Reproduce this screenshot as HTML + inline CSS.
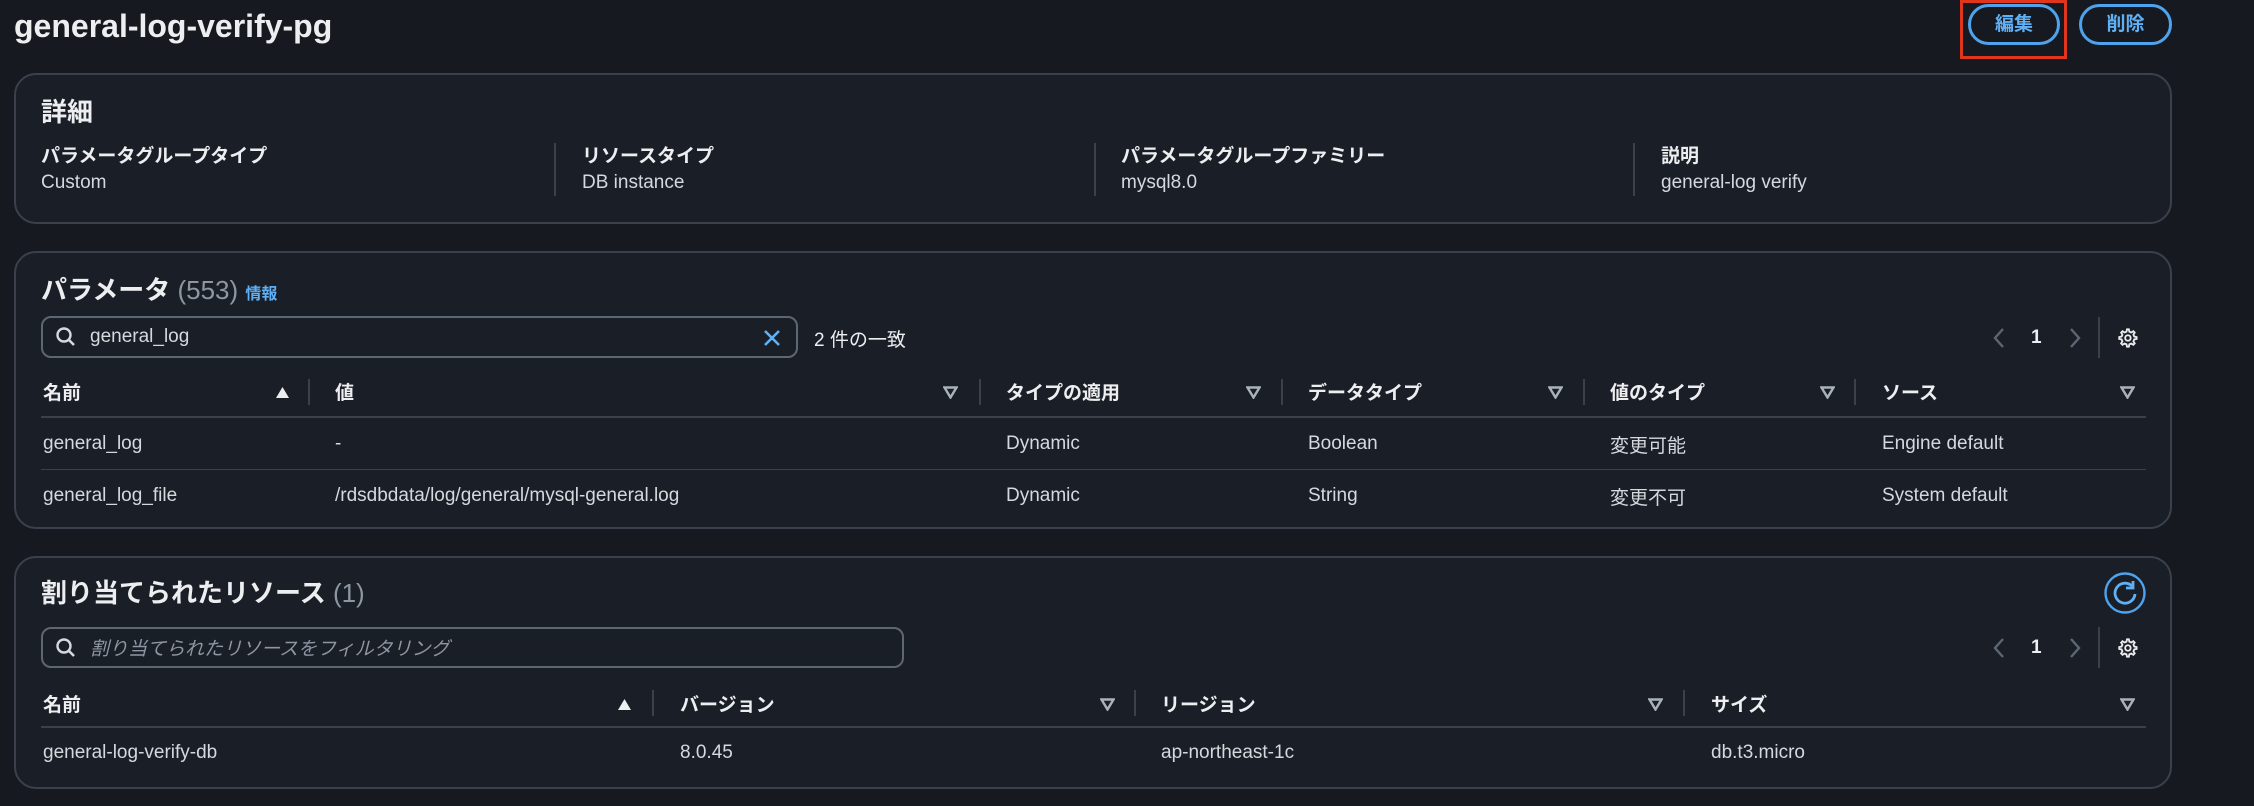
<!DOCTYPE html>
<html><head><meta charset="utf-8"><style>
*{margin:0;padding:0;box-sizing:border-box}
body{width:2254px;height:806px;background:#161a20;font-family:"Liberation Sans","Noto Sans CJK JP",sans-serif;color:#d5d9de;position:relative;overflow:hidden;font-size:19px}
.a{position:absolute;white-space:nowrap;line-height:22px}
.panel{position:absolute;left:14px;width:2158px;background:#1a1e26;border:2px solid #3a414c;border-radius:22px}
.h{color:#eceef0;font-weight:bold}
.lbl{font-weight:bold;color:#eceef0;font-size:19px}
.vd{position:absolute;width:2px;background:#3a414c}
.hl{position:absolute;height:2px;background:#3a414c}
.btn{position:absolute;border:3px solid #4fa3ec;border-radius:22px;color:#5fb0f5;font-weight:bold;font-size:19px;text-align:center;line-height:35px}
.box{position:absolute;border:2px solid #5d6673;border-radius:10px}
.down{position:absolute;width:15px;height:13px}
</style></head><body>
<div class="a h" style="left:14px;top:8px;font-size:32px;line-height:37px">general-log-verify-pg</div>
<div class="a" style="left:1960px;top:0;width:107px;height:59px;border:3px solid #e0361e"></div>
<div class="btn" style="left:1968px;top:4px;width:92px;height:41px">編集</div>
<div class="btn" style="left:2079px;top:4px;width:93px;height:41px">削除</div>

<div class="panel" style="top:73px;height:151px"></div>
<div class="a h" style="left:41px;top:97px;font-size:26px;line-height:30px">詳細</div>
<div class="a lbl" style="left:41px;top:146px">パラメータグループタイプ</div>
<div class="a" style="left:41px;top:172px">Custom</div>
<div class="vd" style="left:554px;top:143px;height:53px"></div>
<div class="a lbl" style="left:582px;top:146px">リソースタイプ</div>
<div class="a" style="left:582px;top:172px">DB instance</div>
<div class="vd" style="left:1094px;top:143px;height:53px"></div>
<div class="a lbl" style="left:1121px;top:146px">パラメータグループファミリー</div>
<div class="a" style="left:1121px;top:172px">mysql8.0</div>
<div class="vd" style="left:1633px;top:143px;height:53px"></div>
<div class="a lbl" style="left:1661px;top:146px">説明</div>
<div class="a" style="left:1661px;top:172px">general-log verify</div>

<div class="panel" style="top:251px;height:278px"></div>
<div class="a h" style="left:41px;top:275px;font-size:26px;line-height:30px">パラメータ <span style="color:#8d96a2;font-weight:normal">(553)</span> <span style="color:#5fb0f5;font-size:16px;font-weight:bold">情報</span></div>
<div class="box" style="left:41px;top:316px;width:757px;height:42px"></div>
<svg class="a" style="left:55px;top:326px" width="22" height="22" viewBox="0 0 22 22"><circle cx="9" cy="9" r="6.5" fill="none" stroke="#d5d9de" stroke-width="2.4"/><path d="M14 14l5 5" stroke="#d5d9de" stroke-width="2.6"/></svg>
<div class="a" style="left:90px;top:326px">general_log</div>
<svg class="a" style="left:762px;top:328px" width="20" height="20" viewBox="0 0 20 20"><path d="M3 3l14 14M17 3L3 17" stroke="#5fb0f5" stroke-width="2.6"/></svg>
<div class="a" style="left:814px;top:330px;color:#eceef0">2 件の一致</div>
<svg class="a" style="left:1992px;top:327px" width="14" height="22" viewBox="0 0 14 22"><path d="M11 2L3 11l8 9" fill="none" stroke="#5d6673" stroke-width="2.4"/></svg>
<div class="a h" style="left:2031px;top:327px">1</div>
<svg class="a" style="left:2068px;top:327px" width="14" height="22" viewBox="0 0 14 22"><path d="M3 2l8 9-8 9" fill="none" stroke="#5d6673" stroke-width="2.4"/></svg>
<div class="vd" style="left:2098px;top:317px;height:41px"></div>
<svg class="a" style="left:2116px;top:327px" width="22" height="22" viewBox="0 0 24 24"><path d="M12 2.5l2 0 .6 2.6 2 .9 2.3-1.4 1.5 1.5-1.4 2.3.9 2 2.6.6v2l-2.6.6-.9 2 1.4 2.3-1.5 1.5-2.3-1.4-2 .9-.6 2.6h-2l-.6-2.6-2-.9-2.3 1.4-1.5-1.5 1.4-2.3-.9-2-2.6-.6v-2l2.6-.6.9-2-1.4-2.3 1.5-1.5 2.3 1.4 2-.9z" fill="none" stroke="#eceef0" stroke-width="2"/><circle cx="13" cy="12" r="3" fill="none" stroke="#eceef0" stroke-width="2"/></svg>

<div class="a lbl" style="left:43px;top:383px">名前</div>
<svg class="a" style="left:275px;top:386px" width="15" height="13"><path d="M7.5 1L14 12H1z" fill="#eceef0"/></svg>
<div class="vd" style="left:308px;top:379px;height:26px"></div>
<div class="a lbl" style="left:335px;top:383px">値</div>
<svg class="down" style="left:943px;top:386px"><path d="M1.5 1.5h12L7.5 11.5z" fill="none" stroke="#aab2bc" stroke-width="2.4"/></svg>
<div class="vd" style="left:979px;top:379px;height:26px"></div>
<div class="a lbl" style="left:1006px;top:383px">タイプの適用</div>
<svg class="down" style="left:1246px;top:386px"><path d="M1.5 1.5h12L7.5 11.5z" fill="none" stroke="#aab2bc" stroke-width="2.4"/></svg>
<div class="vd" style="left:1281px;top:379px;height:26px"></div>
<div class="a lbl" style="left:1308px;top:383px">データタイプ</div>
<svg class="down" style="left:1548px;top:386px"><path d="M1.5 1.5h12L7.5 11.5z" fill="none" stroke="#aab2bc" stroke-width="2.4"/></svg>
<div class="vd" style="left:1583px;top:379px;height:26px"></div>
<div class="a lbl" style="left:1610px;top:383px">値のタイプ</div>
<svg class="down" style="left:1820px;top:386px"><path d="M1.5 1.5h12L7.5 11.5z" fill="none" stroke="#aab2bc" stroke-width="2.4"/></svg>
<div class="vd" style="left:1854px;top:379px;height:26px"></div>
<div class="a lbl" style="left:1882px;top:383px">ソース</div>
<svg class="down" style="left:2120px;top:386px"><path d="M1.5 1.5h12L7.5 11.5z" fill="none" stroke="#aab2bc" stroke-width="2.4"/></svg>
<div class="hl" style="left:41px;top:416px;width:2105px"></div>
<div class="a" style="left:43px;top:433px">general_log</div>
<div class="a" style="left:335px;top:433px">-</div>
<div class="a" style="left:1006px;top:433px">Dynamic</div>
<div class="a" style="left:1308px;top:433px">Boolean</div>
<div class="a" style="left:1610px;top:436px">変更可能</div>
<div class="a" style="left:1882px;top:433px">Engine default</div>
<div class="hl" style="left:41px;top:469px;width:2105px;height:1px"></div>
<div class="a" style="left:43px;top:485px">general_log_file</div>
<div class="a" style="left:335px;top:485px">/rdsdbdata/log/general/mysql-general.log</div>
<div class="a" style="left:1006px;top:485px">Dynamic</div>
<div class="a" style="left:1308px;top:485px">String</div>
<div class="a" style="left:1610px;top:488px">変更不可</div>
<div class="a" style="left:1882px;top:485px">System default</div>

<div class="panel" style="top:556px;height:233px"></div>
<div class="a h" style="left:41px;top:578px;font-size:26px;line-height:30px">割り当てられたリソース <span style="color:#8d96a2;font-weight:normal">(1)</span></div>
<svg class="a" style="left:2104px;top:572px" width="42" height="42" viewBox="0 0 42 42"><circle cx="21" cy="21" r="19.5" fill="none" stroke="#4fa3ec" stroke-width="2.4"/><path d="M28 14a10 10 0 1 0 3 8" fill="none" stroke="#5fb0f5" stroke-width="2.8"/><path d="M29 9v7h-7" fill="none" stroke="#5fb0f5" stroke-width="2.8"/></svg>
<div class="box" style="left:41px;top:627px;width:863px;height:41px"></div>
<svg class="a" style="left:55px;top:637px" width="22" height="22" viewBox="0 0 22 22"><circle cx="9" cy="9" r="6.5" fill="none" stroke="#d5d9de" stroke-width="2.4"/><path d="M14 14l5 5" stroke="#d5d9de" stroke-width="2.6"/></svg>
<div class="a" style="left:90px;top:639px;color:#8d96a2;font-style:italic">割り当てられたリソースをフィルタリング</div>
<svg class="a" style="left:1992px;top:637px" width="14" height="22" viewBox="0 0 14 22"><path d="M11 2L3 11l8 9" fill="none" stroke="#5d6673" stroke-width="2.4"/></svg>
<div class="a h" style="left:2031px;top:637px">1</div>
<svg class="a" style="left:2068px;top:637px" width="14" height="22" viewBox="0 0 14 22"><path d="M3 2l8 9-8 9" fill="none" stroke="#5d6673" stroke-width="2.4"/></svg>
<div class="vd" style="left:2098px;top:627px;height:41px"></div>
<svg class="a" style="left:2116px;top:637px" width="22" height="22" viewBox="0 0 24 24"><path d="M12 2.5l2 0 .6 2.6 2 .9 2.3-1.4 1.5 1.5-1.4 2.3.9 2 2.6.6v2l-2.6.6-.9 2 1.4 2.3-1.5 1.5-2.3-1.4-2 .9-.6 2.6h-2l-.6-2.6-2-.9-2.3 1.4-1.5-1.5 1.4-2.3-.9-2-2.6-.6v-2l2.6-.6.9-2-1.4-2.3 1.5-1.5 2.3 1.4 2-.9z" fill="none" stroke="#eceef0" stroke-width="2"/><circle cx="13" cy="12" r="3" fill="none" stroke="#eceef0" stroke-width="2"/></svg>

<div class="a lbl" style="left:43px;top:695px">名前</div>
<svg class="a" style="left:617px;top:698px" width="15" height="13"><path d="M7.5 1L14 12H1z" fill="#eceef0"/></svg>
<div class="vd" style="left:652px;top:690px;height:26px"></div>
<div class="a lbl" style="left:680px;top:695px">バージョン</div>
<svg class="down" style="left:1100px;top:698px"><path d="M1.5 1.5h12L7.5 11.5z" fill="none" stroke="#aab2bc" stroke-width="2.4"/></svg>
<div class="vd" style="left:1134px;top:690px;height:26px"></div>
<div class="a lbl" style="left:1161px;top:695px">リージョン</div>
<svg class="down" style="left:1648px;top:698px"><path d="M1.5 1.5h12L7.5 11.5z" fill="none" stroke="#aab2bc" stroke-width="2.4"/></svg>
<div class="vd" style="left:1683px;top:690px;height:26px"></div>
<div class="a lbl" style="left:1711px;top:695px">サイズ</div>
<svg class="down" style="left:2120px;top:698px"><path d="M1.5 1.5h12L7.5 11.5z" fill="none" stroke="#aab2bc" stroke-width="2.4"/></svg>
<div class="hl" style="left:41px;top:726px;width:2105px"></div>
<div class="a" style="left:43px;top:742px">general-log-verify-db</div>
<div class="a" style="left:680px;top:742px">8.0.45</div>
<div class="a" style="left:1161px;top:742px">ap-northeast-1c</div>
<div class="a" style="left:1711px;top:742px">db.t3.micro</div>
</body></html>
